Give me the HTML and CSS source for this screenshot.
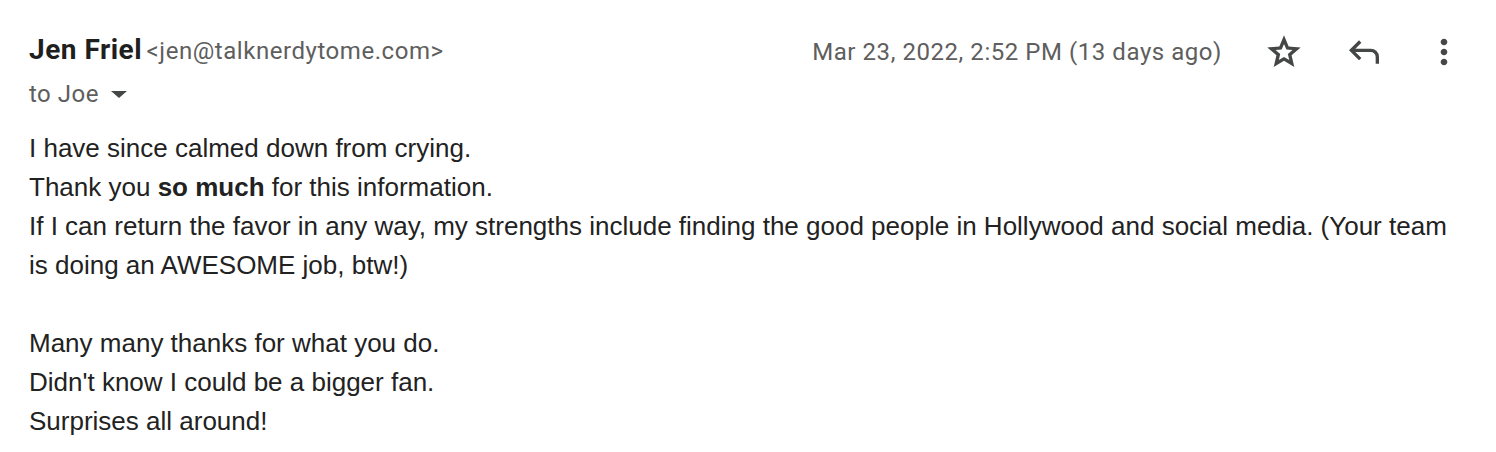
FILE: index.html
```html
<!DOCTYPE html>
<html>
<head>
<meta charset="utf-8">
<link rel="stylesheet" href="styles.css">
</head>
<body>
<div class="msg">
  <div class="head">
    <div class="from">
      <div class="sender"><span class="name">Jen Friel</span> <span class="addr">&lt;jen@talknerdytome.com&gt;</span></div>
      <div class="to">to Joe <svg class="caret" viewBox="0 0 16 7" width="16" height="7"><path d="M0 0h16L8 7z" fill="#444746"/></svg></div>
    </div>
    <div class="meta">
      <span class="date">Mar 23, 2022, 2:52 PM (13 days ago)</span>
      <div class="icons">
        <svg class="icon" viewBox="0 -960 960 960" width="40" height="40"><path fill="#444746" d="m354-287 126-76 126 77-33-144 111-96-146-13-57-136-57 135-146 13 111 97-33 143ZM233-120l65-281L80-590l288-25 112-265 112 265 288 25-218 189 65 281-247-149-247 149Z"/></svg>
        <svg class="icon" viewBox="0 -960 960 960" width="40" height="40"><path fill="#444746" d="M760-200v-160q0-50-35-85t-85-35H273l144 144-57 56-240-240 240-240 57 56-144 144h367q83 0 141.5 58.5T840-360v160h-80Z"/></svg>
        <svg class="icon" viewBox="0 -960 960 960" width="40" height="40"><path fill="#444746" d="M480-160q-33 0-56.5-23.5T400-240q0-33 23.5-56.5T480-320q33 0 56.5 23.5T560-240q0 33-23.5 56.5T480-160Zm0-240q-33 0-56.5-23.5T400-480q0-33 23.5-56.5T480-560q33 0 56.5 23.5T560-480q0 33-23.5 56.5T480-400Zm0-240q-33 0-56.5-23.5T400-720q0-33 23.5-56.5T480-800q33 0 56.5 23.5T560-720q0 33-23.5 56.5T480-640Z"/></svg>
      </div>
    </div>
  </div>
  <div class="body">
    <div>I have since calmed down from crying.</div>
    <div>Thank you <b>so much</b> for this information.</div>
    <div>If I can return the favor in any way, my strengths include finding the good people in Hollywood and social media. (Your team is doing an AWESOME job, btw!)</div>
    <div><br></div>
    <div>Many many thanks for what you do.</div>
    <div>Didn't know I could be a bigger fan.</div>
    <div>Surprises all around!</div>
  </div>
</div>
</body>
</html>
```
FILE: styles.css
```css
html, body { margin: 0; background: #fff; }
.msg { padding: 32px 32px 0 29px; }
.head { display: flex; justify-content: space-between; align-items: flex-start; }
.from { font-family: Roboto, "Liberation Sans", sans-serif; letter-spacing: 0.5px; }
.sender { line-height: 36px; white-space: nowrap; }
.name { font-weight: 700; font-size: 28px; color: #1f1f1f; }
.addr { font-size: 24px; color: #5e5e5e; letter-spacing: 0.55px; }
.to { font-size: 24px; color: #5e5e5e; line-height: 32px; margin-top: 6px; display: flex; align-items: center; gap: 12px; }
.caret { display: block; margin-top: 1px; }
.meta { display: flex; align-items: center; gap: 42px; height: 42px; margin-top: -1px; }
.date { font-family: Roboto, "Liberation Sans", sans-serif; font-size: 24px; letter-spacing: 0.55px; color: #5e5e5e; }
.icons { display: flex; gap: 40px; }
.icon { display: block; }
.body { font-family: "Liberation Sans", Arial, sans-serif; font-size: 26px; line-height: 39px; color: #222; margin-top: 19px; }
.body div { min-height: 39px; }
```
